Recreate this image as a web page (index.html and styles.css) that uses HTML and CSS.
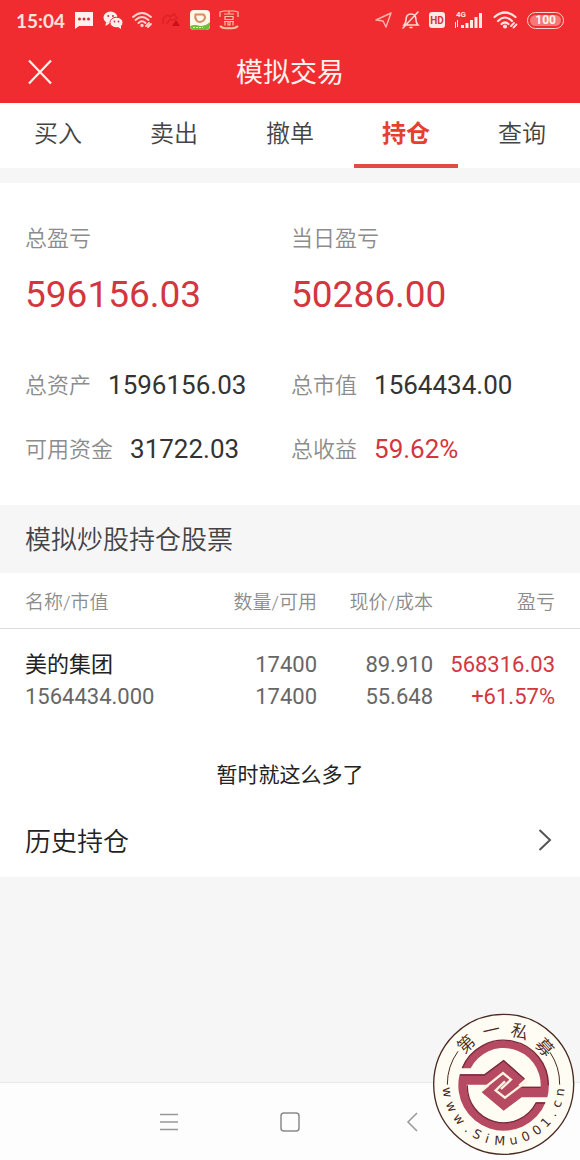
FILE: index.html
```html
<!DOCTYPE html>
<html lang="zh-CN">
<head>
<meta charset="utf-8">
<meta name="viewport" content="width=device-width, initial-scale=1">
<title>模拟交易</title>
<link rel="stylesheet" href="styles.css">
</head>
<body>
<div class="app">
  <header class="header">
    <div class="status">
      <div class="status-group">
        <span class="clock">15:04</span>
        <svg class="icon" width="20" height="20" viewBox="0 0 20 20"><path d="M1 2h18v14H5l-4 3z" fill="#fff0ed"/><g fill="#c9303a"><circle cx="5.500" cy="9" r="1.500"/><circle cx="10" cy="9" r="1.500"/><circle cx="14.500" cy="9" r="1.500"/></g></svg>
        <svg class="icon" width="20" height="20" viewBox="0 0 20 20"><g fill="#fff0ed"><ellipse cx="7.500" cy="7.500" rx="7" ry="6"/><path d="M3 12l-.5 4 4-2.500z"/><ellipse cx="13.500" cy="12.500" rx="6.500" ry="5.300" stroke="#f02c30"/><path d="M15 17l3 2v-4z"/></g><g fill="#c9303a"><circle cx="5.300" cy="6" r="1"/><circle cx="10" cy="6" r="1"/><circle cx="11.500" cy="11.500" r=".9"/><circle cx="15.500" cy="11.500" r=".9"/></g></svg>
        <svg class="icon" width="20" height="20" viewBox="0 0 20 20" fill="none" stroke="#ffd3ce" stroke-width="1.800" stroke-linecap="round"><path d="M1 7q9-8 18 0M3.500 10q6.500-6 13 0M6.500 13q3.500-3.500 7 0"/><circle cx="10" cy="15.500" r=".8" fill="#ffd3ce"/><path d="M14 16l3-3M16 17l3-3"/></svg>
        <svg class="icon" width="20" height="20" viewBox="0 0 20 20"><path d="M2 14q-1-7 5-9l2 2 4-3 3 4-3 2H8l-2 4" fill="none" stroke="#dc2228" stroke-width="1.500"/><path d="M11 16l4-6 4 6z" fill="#cf0f18"/></svg>
        <svg class="icon" width="20" height="20" viewBox="0 0 20 20"><rect width="20" height="20" rx="4" fill="#fff7e8"/><path d="M5.500 4.500h8q3 3 0 6-4 3-7 0-2-3-1-6z" fill="none" stroke="#d68c68" stroke-width="2"/><path d="M0 16q5-2 10 0 6 0 10-4v4q-1 4-4 4H4q-3 0-4-4z" fill="#71bd3c"/><path d="M3 17.500h10" stroke="#e4f4c8" stroke-dasharray="2 1"/></svg>
        <svg class="icon" width="20" height="20" viewBox="0 0 20 20" fill="none" stroke="#f6c2a4" stroke-width="1.200"><path d="M1 7V2l4-1h10l4 1v5"/><path d="M10 1v3M5 4h10M6 6.500h8v3H6zM5 11.500h10M6 11.500v4M14 11.500v4M9 12v3h2v-3"/><path d="M1 16q3 3 9 2 6 1 9-2" stroke-width="2"/></svg>
      </div>
      <div class="status-group status-right">
        <svg class="icon" width="18" height="20" viewBox="0 0 18 20" fill="none" stroke="#ffb0aa" stroke-width="1.500" stroke-linejoin="round"><path d="M1 10l15-7-5 14-3-6z"/></svg>
        <svg class="icon" width="20" height="20" viewBox="0 0 20 20" fill="none" stroke="#ffd9d4" stroke-width="1.600" stroke-linecap="round"><path d="M3 15h14q-2-2-2-5 0-6-5-6T5 10q0 3-2 5zM9 17.500h2M2 18L17 2"/></svg>
        <svg class="icon" width="16" height="20" viewBox="0 0 16 20"><rect y="2" width="16" height="16" rx="3" fill="#ffe9e5"/><text class="hd" x="8" y="14" text-anchor="middle">HD</text></svg>
        <svg class="icon" width="32" height="24" viewBox="0 0 32 24"><text class="net" x="3" y="9">4G</text><g fill="#ffe9e5"><path d="M2 14h1v6H2zM4 12h1v7H4zM8 17h3v3H8zM12.500 15h3v5h-3zM17 12h3v8h-3zM21.500 9h3v11h-3zM26 5h3v15h-3z"/></g></svg>
        <svg class="icon" width="26" height="20" viewBox="0 0 26 20" fill="none" stroke="#ffe3df" stroke-width="2.200" stroke-linecap="round"><path d="M1.500 7q10.500-9 21 0M5 11q7-7 14 0M8.500 14q3.500-3 7 0"/><circle cx="12" cy="16.500" r="1" fill="#ffe3df"/><path d="M18 16l3-3M20.500 17.500l3-3" stroke-width="1.800"/></svg>
        <span class="battery"><span class="battery-level">100</span></span>
      </div>
    </div>
    <div class="titlebar">
      <button class="close" type="button" aria-label="关闭"><svg width="26" height="26" viewBox="0 0 26 26" fill="none" stroke="#fff0e8" stroke-width="2.200"><path d="M2 1.500l22 23M24 1.500l-22 23"/></svg></button>
      <h1 class="title">模拟交易</h1>
    </div>
  </header>

  <nav class="tabs">
    <a class="tab" href="#buy">买入</a>
    <a class="tab" href="#sell">卖出</a>
    <a class="tab" href="#cancel">撤单</a>
    <a class="tab tab-active" href="#hold" aria-current="page">持仓</a>
    <a class="tab" href="#query">查询</a>
  </nav>

  <main class="main">
    <section class="summary">
      <div class="total"><span class="label">总盈亏</span><span class="big">596156.03</span></div>
      <div class="total"><span class="label">当日盈亏</span><span class="big">50286.00</span></div>
      <div class="fact"><span class="label">总资产</span><span class="value">1596156.03</span></div>
      <div class="fact"><span class="label">总市值</span><span class="value">1564434.00</span></div>
      <div class="fact"><span class="label">可用资金</span><span class="value">31722.03</span></div>
      <div class="fact"><span class="label">总收益</span><span class="value up">59.62%</span></div>
    </section>

    <h2 class="section-title">模拟炒股持仓股票</h2>

    <section class="holdings">
      <table class="table">
        <thead>
          <tr><th class="col-name">名称/市值</th><th class="col-qty">数量/可用</th><th class="col-price">现价/成本</th><th class="col-gain">盈亏</th></tr>
        </thead>
        <tbody>
          <tr class="row-first"><td class="stock">美的集团</td><td>17400</td><td>89.910</td><td class="up">568316.03</td></tr>
          <tr class="row-second"><td>1564434.000</td><td>17400</td><td>55.648</td><td class="up">+61.57%</td></tr>
        </tbody>
      </table>
      <p class="end">暂时就这么多了</p>
      <a class="history" href="#history"><span>历史持仓</span>
        <svg width="14" height="24" viewBox="0 0 14 24" fill="none" stroke="#555" stroke-width="2"><path d="M1.500 2l10.500 10L1.500 22"/></svg>
      </a>
    </section>
  </main>

  <footer class="system">
    <button class="key" type="button" aria-label="菜单"><svg width="20" height="20" viewBox="0 0 20 20" stroke="#999" stroke-width="1.500"><path d="M1 2.500h18M1 10h18M1 17.500h18"/></svg></button>
    <button class="key" type="button" aria-label="主页"><svg width="20" height="20" viewBox="0 0 20 20" fill="none" stroke="#8a8a8a" stroke-width="1.500"><rect x="1" y="1" width="18" height="18" rx="3"/></svg></button>
    <button class="key" type="button" aria-label="返回"><svg width="20" height="20" viewBox="0 0 20 20" fill="none" stroke="#999" stroke-width="1.500"><path d="M16 1L7 10l9 9"/></svg></button>
  </footer>

  <svg class="seal" viewBox="0 0 465 465" role="img" aria-label="第一私募 www.SiMu001.cn">
    <circle cx="236" cy="238" r="210" fill="#fffdf3" stroke="#4a2a22" stroke-width="4"/>
    <path d="M67 239A169 169 0 0 1 99 139M404 239A169 169 0 0 0 375 142" fill="none" stroke="#4a2a22" stroke-width="3"/>
    <g fill="#b54a62">
      <path d="M110 190A136 136 0 0 1 367 277H290L236 317L170 262L236 206L288 245H347A111 111 0 0 0 137 190Z"/>
      <path d="M104 208H178L236 165L300 222L236 278L186 239H125A111 111 0 0 0 335 292H362A136 136 0 0 1 104 208Z"/>
    </g>
    <g fill="none" stroke="#7a2a3e" stroke-width="4">
      <path d="M112 189A134 134 0 0 1 370 241M105 210H178L236 167L298 222M127 241A109 109 0 0 0 333 294H360M290 247H347"/>
    </g>
    <g fill="none" stroke="#fff3df" stroke-width="7">
      <path d="M168 257L234 204L258 224L228 252"/>
      <path d="M306 228L240 278L212 256L240 229"/>
    </g>
    <g class="seal-name" text-anchor="middle">
      <text x="236" y="91" transform="rotate(-43 236 238)">第</text>
      <text x="236" y="91" transform="rotate(-13 236 238)">一</text>
      <text x="236" y="91" transform="rotate(17 236 238)">私</text>
      <text x="236" y="91" transform="rotate(48 236 238)">募</text>
    </g>
    <g class="seal-url" text-anchor="middle">
      <text x="236" y="421" transform="rotate(82 236 238)">w</text>
      <text x="236" y="421" transform="rotate(67 236 238)">w</text>
      <text x="236" y="421" transform="rotate(52 236 238)">w</text>
      <text x="236" y="421" transform="rotate(39 236 238)">.</text>
      <text x="236" y="421" transform="rotate(28 236 238)">S</text>
      <text x="236" y="421" transform="rotate(17 236 238)">i</text>
      <text x="236" y="421" transform="rotate(4 236 238)">M</text>
      <text x="236" y="421" transform="rotate(-10 236 238)">u</text>
      <text x="236" y="421" transform="rotate(-23 236 238)">0</text>
      <text x="236" y="421" transform="rotate(-36 236 238)">0</text>
      <text x="236" y="421" transform="rotate(-48 236 238)">1</text>
      <text x="236" y="421" transform="rotate(-59 236 238)">.</text>
      <text x="236" y="421" transform="rotate(-70 236 238)">c</text>
      <text x="236" y="421" transform="rotate(-82 236 238)">n</text>
    </g>
  </svg>
</div>
</body>
</html>
```
FILE: styles.css
```css
* { box-sizing: border-box; }
body {
  margin: 0;
  background: #f6f6f7;
  color: #333;
  font-family: Roboto, "Noto Sans CJK SC", sans-serif;
}
a { color: inherit; text-decoration: none; }
button { border: 0; padding: 0; background: none; font: inherit; }
h1, h2, p { margin: 0; font-weight: 400; }
svg { display: block; flex: none; }

.app { position: relative; display: flex; flex-direction: column; min-height: 100vh; }

.header { background: #f02c30; color: #fff4ee; }
.status { display: flex; justify-content: space-between; align-items: center; height: 40px; padding: 0 16px; }
.status-group { display: flex; align-items: center; gap: 9px; }
.status-right { gap: 8px; }
.clock { font-family: Lato, sans-serif; font-size: 19px; font-weight: 700; color: #ffe3df; }
.hd { font-family: Roboto, sans-serif; font-size: 10px; font-weight: 700; fill: #d8343a; }
.net { font-family: Roboto, sans-serif; font-size: 8px; font-weight: 700; fill: #ffe3df; }
.battery { display: flex; height: 17px; padding: 2px; border: 1px solid #ffd3ce; border-radius: 9px; }
.battery-level { padding: 0 5px; border-radius: 7px; background: #f5797a; color: #fff4ee; font-size: 12px; font-weight: 700; line-height: 11px; }

.titlebar { display: grid; grid-template-columns: 48px 1fr 48px; align-items: center; height: 63px; padding: 0 16px; }
.close { justify-self: center; }
.title { padding-top: 2px; text-align: center; font-size: 27px; line-height: 40px; }

.tabs { display: grid; grid-template-columns: repeat(5, 1fr); height: 65px; background: #fff; }
.tab { display: flex; justify-content: center; margin: 0 6px; padding-top: 13px; border-bottom: 4px solid transparent; color: #444; font-size: 24px; font-weight: 350; line-height: 36px; }
.tab-active { border-color: #e04b45; color: #e5402f; font-weight: 700; }

.main { flex: 1; padding-top: 15px; }
.summary { display: grid; grid-template-columns: 1fr 1fr; column-gap: 2px; padding: 38px 25px 24px; background: #fff; }
.total { display: flex; flex-direction: column; gap: 12px; height: 132px; }
.label { color: #8c8c8c; font-size: 22px; font-weight: 350; line-height: 36px; }
.big { color: #d3363f; font-size: 37px; line-height: 52px; }
.fact { display: flex; align-items: center; gap: 17px; height: 64px; }
.fact .label { padding-top: 2px; }
.value { font-size: 26px; line-height: 36px; }

.section-title { height: 68px; padding: 2px 0 0 25px; color: #444; font-size: 26px; font-weight: 350; line-height: 66px; }

.holdings { background: #fff; }
.table { width: 100%; border-collapse: collapse; table-layout: fixed; color: #666; font-size: 22px; text-align: right; }
.table th { height: 55px; padding: 0 2px 0 0; border-bottom: 1px solid #ddd; color: #8c8c8c; font-size: 19px; font-weight: 350; }
.table td { padding: 0 2px 0 0; line-height: 32px; }
.table th:first-child, .table td:first-child { padding-left: 25px; text-align: left; }
.table th:last-child, .table td:last-child { padding-right: 25px; }
.col-name { width: 35%; }
.col-qty { width: 20%; }
.col-price { width: 20%; }
.col-gain { width: 25%; }
.table .row-first td { padding-top: 20px; }
.table .stock { color: #222; }
.table .up, .up { color: #d3363f; }
.end { padding: 47px 0 13px; color: #222; font-size: 21px; line-height: 30px; text-align: center; }
.history { display: flex; justify-content: space-between; align-items: center; height: 74px; padding: 0 28px 0 25px; color: #222; font-size: 26px; font-weight: 350; }

.system { display: flex; justify-content: center; align-items: center; gap: 101px; height: 78px; border-top: 1px solid #e8e8e8; background: #fdfdfd; }

.seal { position: absolute; right: 0; bottom: 0; width: 155px; height: 155px; }
.seal-name { font-family: "Noto Sans CJK SC", sans-serif; font-size: 52px; font-weight: 350; fill: #4a2a22; }
.seal-url { font-family: "DejaVu Sans", sans-serif; font-size: 38px; fill: #4a2a22; }
```
